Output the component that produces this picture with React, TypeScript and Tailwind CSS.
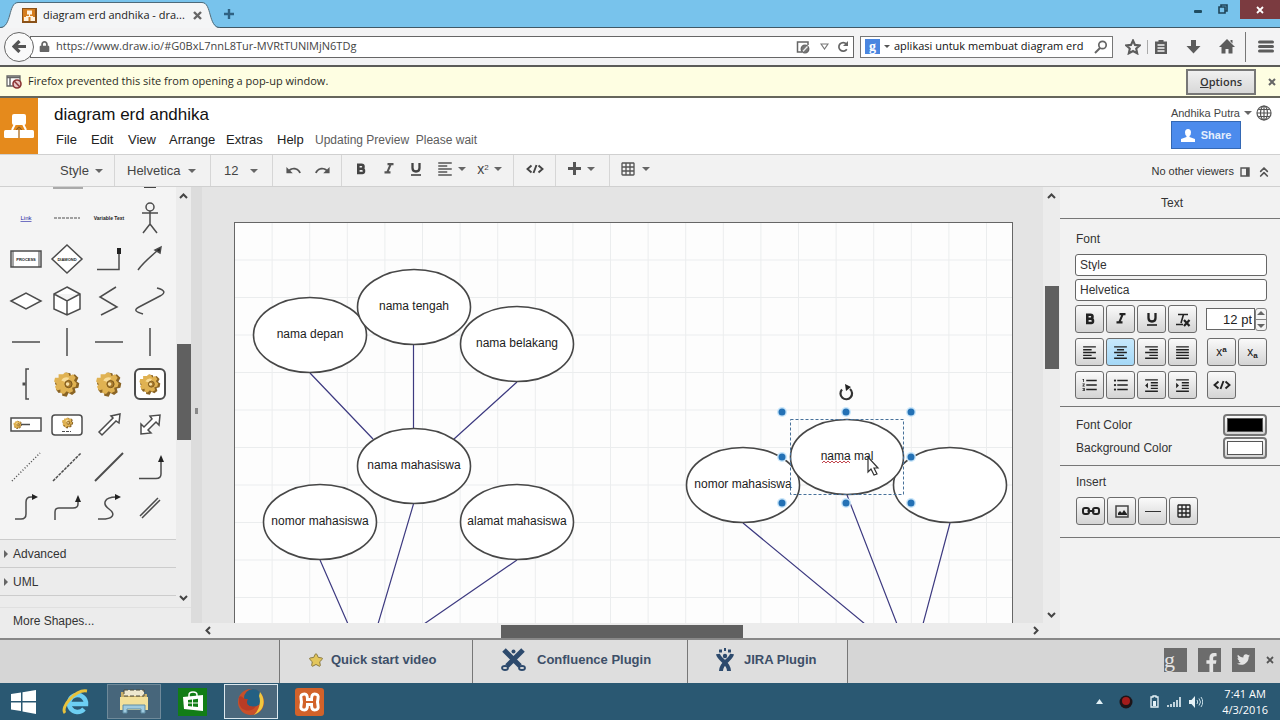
import React from 'react';
import {
  MdFormatItalic, MdFormatAlignLeft, MdFormatAlignCenter, MdFormatAlignRight,
  MdFormatAlignJustify, MdFormatListBulleted, MdFormatListNumbered, MdFormatIndentDecrease, MdFormatIndentIncrease,
  MdUndo, MdRedo, MdGridOn,
} from 'react-icons/md';
import { FaLock, FaStar, FaFacebookF, FaTwitter } from 'react-icons/fa';
import { ChevronsUp } from 'lucide-react';

const caret = 'h-0 w-0 shrink-0 border-x-4 border-t-4 border-x-transparent border-t-[#666]';

function Caret() {
  return <span className={caret} />;
}

function BoldIcon() {
  return (
    <svg width="18" height="18" viewBox="0 0 18 18" fill="none" stroke="currentColor" strokeWidth="2.600">
      <path d="M6.300 4.800H9.500Q11.500 4.800 11.500 6.800T9.500 8.800H6.300ZM6.300 8.800H10Q12 8.800 12 11T10 13H6.300Z" />
    </svg>
  );
}

function UnderlineIcon() {
  return (
    <svg width="16" height="18" viewBox="0 0 16 18" fill="none" stroke="currentColor">
      <path d="M4.500 3V8Q4.500 11.500 8 11.500T11.500 8V3" strokeWidth="2.300" /><path d="M3 15H13" strokeWidth="1.600" />
    </svg>
  );
}

function CodeIcon() {
  return (
    <svg width="18" height="10" viewBox="0 0 18 10" fill="none" stroke="currentColor" strokeWidth="1.900" className="shrink-0">
      <path d="M5.500 1.500L1.500 5L5.500 8.500M12.500 1.500L16.500 5L12.500 8.500M10.500 1L7.500 9" />
    </svg>
  );
}

function TitleBar() {
  return (
    <div className="flex h-7 shrink-0 items-stretch border-b border-[#3f5866] bg-[#78c3ec]">
      <div className="-mb-px flex pt-0.5">
        <svg width="18" height="26" viewBox="0 0 18 26" className="shrink-0">
          <path d="M0 26C12 26 7 1 18 1V26Z" fill="#f4f5f6" />
          <path d="M0 25.5C12 25.5 8 .5 18 .5" fill="none" stroke="#4d6a7a" />
        </svg>
        <div className="flex w-[184px] items-center border-t border-[#4d6a7a] bg-[#f4f5f6] pl-1">
          <svg width="15" height="15" viewBox="0 0 15 15" className="shrink-0">
            <rect width="15" height="15" fill="#8a5219" />
            <rect x="1" y="1" width="12" height="12" fill="#d57d1e" />
            <path d="M5 2.500h5v4H5zM2 9h4.500v4H2zM8.500 9H13v4H8.500zM7 6h1v2H7zM4 8h7v1H4z" fill="#fff3e0" />
          </svg>
          <span className="ml-1.5 whitespace-nowrap text-[11px] font-medium text-[#222]">diagram erd andhika - dra...</span>
          <button aria-label="Close tab" className="ml-auto">
            <svg width="9" height="9" viewBox="0 0 9 9"><path d="M1 1l7 7M8 1L1 8" stroke="#666" strokeWidth="2.400" /></svg>
          </button>
        </div>
        <svg width="18" height="26" viewBox="0 0 18 26" className="shrink-0">
          <path d="M18 26C6 26 11 1 0 1V26Z" fill="#f4f5f6" />
          <path d="M18 25.5C6 25.5 10 .5 0 .5" fill="none" stroke="#4d6a7a" />
        </svg>
      </div>
      <button aria-label="New tab" className="flex items-center pl-1">
        <svg width="10" height="10" viewBox="0 0 10 10"><path d="M5 0v10M0 5h10" stroke="#2f6182" strokeWidth="2.400" /></svg>
      </button>
      <div className="ml-auto flex items-start gap-4">
        <button aria-label="Minimize" className="pt-2.5"><svg width="8" height="3" className="block"><rect width="8" height="3" rx="1" fill="#1f4c61" /></svg></button>
        <button aria-label="Restore" className="pt-1">
          <svg width="10" height="10" viewBox="0 0 10 10" className="block"><path d="M1 3h6v6H1zM3 3V1h6v6H7" fill="none" stroke="#1f4458" strokeWidth="1.600" /></svg>
        </button>
        <button aria-label="Close window" className="-ml-1 flex h-[19px] w-10 items-center justify-center bg-[#7b3b40]">
          <svg width="8" height="8" viewBox="0 0 8 8"><path d="M1 1l6 6M7 1L1 7" stroke="#fff" strokeWidth="1.800" /></svg>
        </button>
      </div>
    </div>
  );
}

function NavBar() {
  return (
    <div className="flex h-[39px] shrink-0 items-center border-b-2 border-[#5b5b58] bg-[#f3f3f4] pl-1">
      <button aria-label="Back" className="z-10 flex h-[30px] w-[30px] shrink-0 items-center justify-center rounded-full border border-[#666] bg-[#fafafa]">
        <svg width="14" height="13" viewBox="0 0 14 13"><path d="M7.500 1L2 6.500L7.500 12M2 6.500H14" fill="none" stroke="#555" strokeWidth="3.200" /></svg>
      </button>
      <div className="-ml-1 flex h-[22px] min-w-0 flex-1 items-center border border-[#666] bg-white pl-1.5">
        <FaLock size={11} color="#666" className="ml-0.5 shrink-0" />
        <input aria-label="Address" className="ml-1.5 min-w-0 flex-1 bg-transparent text-[11px] text-[#444] outline-none" defaultValue="https://www.draw.io/#G0BxL7nnL8Tur-MVRtTUNlMjN6TDg" />
        <svg width="14" height="14" viewBox="0 0 14 14" className="shrink-0">
          <path d="M6 12H1.500V2H12v3" fill="none" stroke="#666" strokeWidth="1.500" />
          <circle cx="9" cy="9" r="3.800" fill="#777" stroke="#666" strokeWidth="1.300" /><path d="M7 11.300L11.500 6.500" stroke="#eee" strokeWidth="1.300" />
        </svg>
        <svg width="9" height="7" viewBox="0 0 9 7" className="ml-2.5 shrink-0"><path d="M1 1h7L4.500 6Z" fill="none" stroke="#777" strokeWidth="1.200" /></svg>
        <button aria-label="Reload" className="ml-2 mr-1">
          <svg width="12" height="12" viewBox="0 0 12 12"><path d="M9.800 8.200A4.300 4.300 0 1 1 9.400 3" fill="none" stroke="#666" strokeWidth="1.700" /><path d="M11 0v5H6Z" fill="#666" /></svg>
        </button>
      </div>
      <div className="ml-1.5 flex h-[22px] w-[253px] shrink-0 items-center border border-[#777] bg-white pl-1">
        <span className="flex h-[15px] w-[15px] shrink-0 items-center justify-center bg-[#4a86e0] font-['Liberation_Serif',serif] text-sm font-bold leading-none text-white">g</span>
        <span className="ml-1 h-0 w-0 shrink-0 border-x-[3px] border-t-[3px] border-x-transparent border-t-[#555]" />
        <input aria-label="Search" className="ml-1 min-w-0 flex-1 bg-transparent text-[11px] text-[#111] outline-none" defaultValue="aplikasi untuk membuat diagram erd" />
        <svg width="14" height="14" viewBox="0 0 14 14" className="mr-1 shrink-0"><circle cx="8.500" cy="5" r="3.700" fill="none" stroke="#666" strokeWidth="1.700" /><path d="M6 8L1 13" stroke="#666" strokeWidth="2" /></svg>
      </div>
      <div className="ml-3 flex shrink-0 items-center">
        <button aria-label="Bookmark">
          <svg width="16" height="16" viewBox="0 0 16 16"><path d="M8 1.500l2 4.400 4.700.5-3.500 3.200 1 4.700L8 12l-4.200 2.300 1-4.700L1.300 6.400 6 5.900Z" fill="none" stroke="#5c5c5c" strokeWidth="2.100" /></svg>
        </button>
        <span className="mx-1.5 h-3.5 w-px bg-[#aaa]" />
        <button aria-label="Bookmarks list">
          <svg width="14" height="16" viewBox="0 0 14 16"><path d="M1 2.500h3.500V1h5v1.500H13V15H1Z" fill="#5c5c5c" /><path d="M3.500 6h7M3.500 9h7M3.500 12h7" stroke="#f3f3f4" strokeWidth="1.300" /></svg>
        </button>
        <button aria-label="Downloads" className="ml-[18px]"><svg width="15" height="15" viewBox="0 0 15 15"><path d="M5 1h5v6h4.500L7.500 14.500L.5 7H5Z" fill="#5c5c5c" /></svg></button>
        <button aria-label="Home" className="ml-[18px]"><svg width="16" height="15" viewBox="0 0 16 15"><path d="M8 0L16 8H13.500V14.500H9.500V10H6.500V14.500H2.500V8H0ZM11.500 1h2v3.500l-2-2Z" fill="#5c5c5c" /></svg></button>
        <span className="ml-2.5 h-[30px] w-px bg-[#777]" />
        <button aria-label="Menu" className="ml-3 mr-1.5"><svg width="16" height="13" className="block"><path d="M1.500 2h13M1.500 6.500h13M1.500 11h13" stroke="#5c5c5c" strokeWidth="3" strokeLinecap="round" /></svg></button>
      </div>
    </div>
  );
}

function Notification() {
  return (
    <div className="flex h-[31px] shrink-0 items-center border-b-2 border-[#66665c] bg-[#fefee2] pl-1.5">
      <svg width="16" height="15" viewBox="0 0 16 15" className="shrink-0">
        <path d="M1 2h13v10H1Z" fill="#fff" stroke="#666" strokeWidth="1.300" /><path d="M1 3.500h13M4 3v9" stroke="#666" strokeWidth="1.500" />
        <circle cx="11" cy="10" r="4" fill="#e9c6c6" stroke="#8b3535" strokeWidth="1.600" /><path d="M8.300 7.300l5.400 5.400" stroke="#8b3535" strokeWidth="1.500" />
      </svg>
      <span className="ml-1.5 text-[11px] font-medium text-[#2c2c24]">Firefox prevented this site from opening a pop-up window.</span>
      <button className="ml-auto h-[26px] w-[70px] border-2 border-[#777] bg-linear-to-b from-[#f0f0f0] to-[#d8d8d8] text-[11px] font-semibold leading-none text-[#333]"><u>O</u>ptions</button>
      <button aria-label="Dismiss" className="ml-3 mr-1"><svg width="8" height="8" viewBox="0 0 8 8"><path d="M1 1l6 6M7 1L1 7" stroke="#666" strokeWidth="2" /></svg></button>
    </div>
  );
}

function Header() {
  return (
    <header className="flex h-14 shrink-0 bg-white font-['Liberation_Sans',sans-serif]">
      <div className="flex w-[38px] items-center justify-center bg-[#e58a1c]">
        <svg width="30" height="26" viewBox="0 0 30 26">
          <path d="M12 9L8 17M18 9l4 8" stroke="#fff" strokeWidth="2" />
          <rect x="8" y="1" width="14" height="11" rx="2" fill="#fff" /><rect y="17" width="30" height="8" rx="1.500" fill="#fff" /><path d="M12.500 17Q15 11 17.500 17" fill="#e58a1c" stroke="#7d5524" /><path d="M15 15v10" stroke="#a8691f" strokeWidth="1.300" />
        </svg>
      </div>
      <div className="flex flex-col pl-4">
        <h1 className="mt-1.5 text-[17px] leading-[22px] text-[#111]">diagram erd andhika</h1>
        <nav className="mt-1.5 flex text-[13px] leading-4 text-[#222]">
          <button className="ml-0.5 w-[35px] text-left">File</button>
          <button className="w-[37px] text-left">Edit</button>
          <button className="w-[41px] text-left">View</button>
          <button className="w-[57px] text-left">Arrange</button>
          <button className="w-[51px] text-left">Extras</button>
          <button className="w-[38px] text-left">Help</button>
          <span className="text-xs leading-4 text-[#5c5c5c]">Updating Preview&nbsp; Please wait</span>
        </nav>
      </div>
      <div className="ml-auto flex flex-col items-end pr-2">
        <div className="mt-[7px] flex items-center text-[11px] leading-4 text-[#444]">
          <button className="mr-1">Andhika Putra</button>
          <Caret />
          <button aria-label="Language" className="ml-1">
            <svg width="16" height="16" viewBox="0 0 16 16" fill="none" stroke="#555" strokeWidth="1.200"><circle cx="8" cy="8" r="7" /><ellipse cx="8" cy="8" rx="3.500" ry="7" /><path d="M1 8h14M8 1v14M2.500 4.500h11M2.500 11.500h11" /></svg>
          </button>
        </div>
        <button className="mr-[31px] flex h-7 w-[70px] items-center justify-center gap-1.5 border border-[#3468b4] bg-[#4c8bec] text-[11px] font-bold text-[#e4eefc]">
          <svg width="14" height="13" viewBox="0 0 14 13"><path d="M7 0Q10 0 10 3.500Q10 6 8.500 7V8L14 10V13H0V10L5.500 8V7Q4 6 4 3.500Q4 0 7 0Z" fill="#fff" /></svg>
          Share
        </button>
      </div>
    </header>
  );
}

const group = 'flex h-full items-center border-r border-[#d6d6d6]';

function Toolbar() {
  return (
    <div className="flex h-[33px] shrink-0 items-center border-y border-[#d0d0d0] bg-[#f2f2f2] font-['Liberation_Sans',sans-serif] text-[13px] text-[#444]">
      <button className={`${group} w-[115px] gap-1.5 pl-[60px]`}>Style<Caret /></button>
      <button className={`${group} w-24 gap-2 pl-3`}>Helvetica<Caret /></button>
      <button className={`${group} w-[62px] gap-3 pl-[13px]`}>12<Caret /></button>
      <div className={`${group} w-[69px] gap-3 pl-3`}>
        <button aria-label="Undo"><MdUndo size={17} color="#555" /></button>
        <button aria-label="Redo"><MdRedo size={17} color="#555" /></button>
      </div>
      <div className={`${group} w-[172px] pb-1 pl-2.5`}>
        <button aria-label="Bold" className="w-7"><BoldIcon /></button>
        <button aria-label="Italic" className="w-7"><MdFormatItalic size={18} color="#555" /></button>
        <button aria-label="Underline" className="w-7"><UnderlineIcon /></button>
        <button aria-label="Align" className="flex w-10 items-center gap-1"><MdFormatAlignLeft size={18} color="#555" /><Caret /></button>
        <button aria-label="Superscript" className="flex items-center gap-1"><span className="w-3.5 text-sm leading-none">x<sup className="text-[8px]">2</sup></span><Caret /></button>
      </div>
      <div className={`${group} w-[42px] justify-center pb-1`}><button aria-label="HTML"><CodeIcon /></button></div>
      <button aria-label="Insert" className={`${group} w-[54px] gap-1.5 pb-1 pl-3`}>
        <svg width="13" height="13" className="shrink-0"><path d="M6.500 0v13M0 6.500h13" stroke="#555" strokeWidth="3" /></svg><Caret />
      </button>
      <button aria-label="Table" className="flex items-center gap-1.5 pb-1 pl-2.5"><MdGridOn size={16} color="#555" /><Caret /></button>
      <div className="ml-auto flex items-center gap-1.5 pr-2 pt-0.5 text-[11px] text-[#333]">
        No other viewers
        <svg width="10" height="10" viewBox="0 0 10 10"><path d="M1 1h8v8H1Z" fill="none" stroke="#555" strokeWidth="1.400" /><path d="M7.500 1v8" stroke="#555" strokeWidth="3" /></svg>
        <button aria-label="Collapse"><ChevronsUp size={16} strokeWidth={2.500} color="#555" /></button>
      </div>
    </div>
  );
}

function Gear() {
  return (
    <g transform="translate(3.500 3) scale(.9)">
      <path d="M15 9l2-3 5 1 1 3 4-2 4 4-2 4 3 2-1 5-4 1 1 4-4 3-4-2-2 4-5-1 0-4-4 1-3-4 2-3-3-3 1-5 4 0 0-4Z" fill="#8a6425" stroke="none" />
      <path d="M14 8l2-2 4 1 1 3 4-2 3 4-2 3 3 3-1 4-4 1 1 4-4 2-3-2-3 3-4-1 0-4-4 1-2-4 2-3-3-3 1-4 4 0 0-4Z" fill="#e0b252" stroke="none" />
      <path d="M12 15Q15 10 21 12L17 17Z" fill="#f8dc98" stroke="none" />
      <circle cx="20" cy="19" r="4" fill="#a87a2c" stroke="#73501a" strokeWidth="1" />
      <circle cx="19" cy="19" r="2" fill="#f6e0a8" stroke="none" />
    </g>
  );
}

const shapes: { name: string; art: React.ReactNode }[] = [
  { name: 'Link', art: <text x="20" y="22" fontSize="6" textAnchor="middle" fill="#1a1aa0" stroke="none" textDecoration="underline">Link</text> },
  { name: 'Timestamp', art: <path d="M7 20H33" strokeDasharray="3 1" strokeWidth="1" /> },
  { name: 'Variable', art: <text x="20" y="22" fontSize="5" fontWeight="bold" textAnchor="middle" fill="#222" stroke="none">Variable Text</text> },
  { name: 'Actor', art: <g><circle cx="20" cy="9" r="4" /><path d="M20 13V26M12 15H28M20 26L13 35M20 26L27 35" /></g> },
  { name: 'Fixed process', art: <g><rect x="5" y="12" width="30" height="16" fill="#fff" /><path d="M7 12v16M33 12v16" strokeWidth="1" /><text x="20" y="22" fontSize="4" fontWeight="bold" textAnchor="middle" fill="#222" stroke="none">PROCESS</text></g> },
  { name: 'Decision', art: <g><path d="M20 6L35 20L20 34L5 20Z" fill="#fff" /><text x="20" y="22" fontSize="4" fontWeight="bold" textAnchor="middle" fill="#222" stroke="none">DIAMOND</text></g> },
  { name: 'Elbow', art: <g><path d="M8 30.500H30V14" /><path d="M28 9h4v6h-4Z" fill="#222" stroke="none" /></g> },
  { name: 'Arrow line', art: <g><path d="M8 31C12 25 20 18 27 12" /><path d="M31 8l-1 6-5-3Z" fill="#222" /></g> },
  { name: 'Rhombus', art: <path d="M5 20L20 12L35 20L20 28Z" fill="#fff" /> },
  { name: 'Cube', art: <path d="M20 6L33 13V28L20 34L7 28V13ZM7 13L20 20L33 13M20 20V34" fill="#fff" /> },
  { name: 'Zigzag', art: <path d="M27 6L11 16L28 26L12 34" /> },
  { name: 'Curve', art: <path d="M27 7C35 9 36 12 30 15L9 26C3 29 6 31 13 33" /> },
  { name: 'Line', art: <path d="M6 20H34" /> },
  { name: 'Vertical line', art: <path d="M20 6V34" /> },
  { name: 'Thin line', art: <path d="M6 20H34" /> },
  { name: 'Thin vertical line', art: <path d="M20 6V34" /> },
  { name: 'Bracket', art: <g><path d="M23 5H20V35H23" /><path d="M16.500 20h3" strokeWidth="3" /></g> },
  { name: 'Gear image', art: <Gear /> },
  { name: 'Gear icon', art: <Gear /> },
  { name: 'Gear in box', art: <g><rect x="5" y="5" width="30" height="30" rx="5" fill="#fff" strokeWidth="2" /><g transform="translate(3.500 3.500) scale(.83)"><Gear /></g></g> },
  { name: 'Label', art: <g><rect x="5" y="13" width="30" height="13" fill="#fff" /><g transform="translate(5 13) scale(.34)"><Gear /></g><path d="M15 19.500H24" /></g> },
  { name: 'Label card', art: <g><rect x="5" y="10" width="30" height="20" rx="3" fill="#fff" /><g transform="translate(12 9) scale(.44)"><Gear /></g><path d="M15 26.500H24" strokeDasharray="3 1" strokeWidth="1" /></g> },
  { name: 'Arrow', art: <path d="M10 27L24 13L22 11L31 9L30 18L27 16L13 30Z" fill="#fff" /> },
  { name: 'Double arrow', art: <path d="M11 29V19L14 22L22 14L20 11L30 10L29 20L26 17L18 25L21 28Z" fill="#fff" /> },
  { name: 'Dotted line', art: <path d="M6 34L34 6" strokeDasharray="1 2" /> },
  { name: 'Dashed line', art: <path d="M6 34L34 6" strokeDasharray="3 1" /> },
  { name: 'Solid line', art: <path d="M6 34L34 6" strokeWidth="2" /> },
  { name: 'Rounded elbow', art: <g><path d="M9 31.500H26Q31 31.500 31 27V12" /><path d="M31 8l3 7h-6Z" fill="#222" stroke="none" /></g> },
  { name: 'S elbow', art: <g><path d="M9 31H15Q20 31 20 26V14Q20 9 25 9H27" /><path d="M32 9l-6 3V6Z" fill="#222" stroke="none" /></g> },
  { name: 'Step elbow', art: <g><path d="M8 32V24Q8 20 12 20H26Q31 20 31 16V13" /><path d="M31 7l3 7h-6Z" fill="#222" stroke="none" /></g> },
  { name: 'S curve', art: <g><path d="M9 31C25 32 27 26 20 21C13 16 15 9 27 9" /><path d="M32 9l-6 3V6Z" fill="#222" stroke="none" /></g> },
  { name: 'Double line', art: <path d="M10 28L28 10M12 30L30 12" /> },
];

function VScroll({ thumbTop, thumbHeight, grow }: { thumbTop: string; thumbHeight: string; grow?: boolean }) {
  return (
    <div className={`flex w-[15px] shrink-0 flex-col items-center bg-[#ececec] py-1.5 ${grow ? 'flex-1' : ''}`}>
      <svg width="9" height="6" className="shrink-0"><path d="M1 5L4.500 1.500L8 5" fill="none" stroke="#444" strokeWidth="2" /></svg>
      <div className={`w-[14px] shrink-0 bg-[#606060] ${thumbTop} ${thumbHeight}`} />
      <svg width="9" height="6" className="mt-auto shrink-0"><path d="M1 1L4.500 4.500L8 1" fill="none" stroke="#444" strokeWidth="2" /></svg>
    </div>
  );
}

function Sidebar() {
  return (
    <aside className="flex w-[191px] shrink-0 flex-col bg-[#f4f4f4] font-['Liberation_Sans',sans-serif] text-xs text-[#333]">
      <div className="flex min-h-0 flex-1">
        <div className="flex min-w-0 flex-1 flex-col overflow-hidden">
          <div className="flex h-2.5 shrink-0 items-start pl-[53px]"><span className="h-0.5 w-[30px] bg-[#aaa]" /><span className="ml-[61px] h-px w-3 bg-[#444]" /></div>
          <div className="grid h-[332px] shrink-0 grid-cols-4 grid-rows-8 px-[5px]">
            {shapes.map((s) => (
              <button key={s.name} aria-label={s.name} className="flex items-center justify-center">
                <svg width="40" height="40" viewBox="0 0 40 40" fill="none" stroke="#4c4c4c" strokeWidth="1.500" className="shrink-0">{s.art}</svg>
              </button>
            ))}
          </div>
          <button className="mt-2.5 flex h-7 shrink-0 items-center gap-[5px] border-t border-[#ccc] bg-[#ececec] pl-1"><span className="h-0 w-0 border-y-4 border-l-4 border-y-transparent border-l-[#666]" />Advanced</button>
          <button className="flex h-7 shrink-0 items-center gap-[5px] border-t border-[#ccc] bg-[#ececec] pl-1"><span className="h-0 w-0 border-y-4 border-l-4 border-y-transparent border-l-[#666]" />UML</button>
          <div className="flex-1 border-t border-[#ccc] bg-[#ececec]" />
        </div>
        <VScroll thumbTop="mt-[145px]" thumbHeight="h-[96px]" />
      </div>
      <button className="h-[31px] border-t border-[#e0e0e0] bg-[#ececec] pb-1 pl-[13px] text-left">More Shapes...</button>
    </aside>
  );
}

const nodes: { cx: number; cy: number; label?: string }[] = [
  { cx: 310, cy: 335, label: 'nama depan' },
  { cx: 414, cy: 307, label: 'nama tengah' },
  { cx: 517, cy: 344, label: 'nama belakang' },
  { cx: 414, cy: 466, label: 'nama mahasiswa' },
  { cx: 320, cy: 522, label: 'nomor mahasiswa' },
  { cx: 517, cy: 522, label: 'alamat mahasiswa' },
  { cx: 743, cy: 485, label: 'nomor mahasiswa' },
  { cx: 950, cy: 485 },
  { cx: 847, cy: 457, label: 'nama mal' },
];

const handles = [[782, 412], [846, 412], [911, 412], [782, 457], [911, 457], [782, 503], [846, 503], [911, 503]];

function Diagram() {
  return (
    <svg width="777" height="401" viewBox="235 223 777 401" className="block font-['Liberation_Sans',sans-serif]">
      <defs>
        <pattern id="grid" x="235" y="223" width="37.600" height="37.500" patternUnits="userSpaceOnUse">
          <path d="M37.100 0V37.500M0 37H37.600" stroke="#ebedee" fill="none" />
        </pattern>
      </defs>
      <rect x="235" y="223" width="777" height="401" fill="url(#grid)" />
      <path d="M310 373L373 439M413.500 345V429M517 382L454 439M413.500 504L378 624M320 560L348 624M517 560L424 624M743 523L865 624M847 495L897 624M950 523L923 624" stroke="#3d3a80" strokeWidth="1.200" fill="none" />
      {nodes.map((n, i) => (
        <g key={i}>
          <ellipse cx={n.cx} cy={n.cy} rx="56.500" ry="37.500" fill="#fff" stroke="#474747" strokeWidth="1.600" />
          {n.label && <text x={n.cx} y={n.cy + 3} textAnchor="middle" fontSize="12" fill="#1c1c1c">{n.label}</text>}
        </g>
      ))}
      <path d="M822 463l2-2 2 2 2-2 2 2 2-2 2 2 2-2 2 2 2-2 2 2 2-2 2 2 2-2 2 2" stroke="#c2474f" fill="none" />
      <rect x="790.5" y="419.5" width="113" height="75" fill="none" stroke="#47719a" strokeDasharray="3 2" />
      {handles.map(([x, y]) => (
        <g key={`${x}-${y}`}><circle cx={x} cy={y} r="5" fill="#c9e6fa" /><circle cx={x} cy={y} r="3.500" fill="#2471b5" /></g>
      ))}
      <path d="M842 389.500A5.800 5.800 0 1 0 850 389" fill="none" stroke="#333" strokeWidth="2.200" /><path d="M845 384l6 3-5 4Z" fill="#222" />
      <path d="M868 457V472L871 469L874 475L877 474L874 468H878Z" fill="#fff" stroke="#333" strokeWidth="1.200" />
    </svg>
  );
}

function Canvas() {
  return (
    <div className="flex min-w-0 flex-1 flex-col bg-[#e4e4e4]">
      <div className="flex min-h-0 flex-1">
        <div className="flex w-[11px] shrink-0 items-center justify-center bg-[#dcdcdc] pt-3"><span className="h-1.5 w-[3px] bg-[#888]" /></div>
        <div className="min-w-0 flex-1 overflow-hidden pl-8 pt-[35px]">
          <div className="h-full w-[779px] overflow-hidden border border-b-0 border-[#666] bg-[#fdfdfd]"><Diagram /></div>
        </div>
      </div>
      <div className="flex h-[15px] shrink-0 items-center bg-[#ececec] pl-3.5">
        <svg width="6" height="9" className="shrink-0"><path d="M5 1L1.500 4.500L5 8" fill="none" stroke="#444" strokeWidth="2" /></svg>
        <div className="ml-[290px] h-[13px] w-[242px] self-end bg-[#606060]" />
        <svg width="6" height="9" className="ml-auto mr-1 shrink-0"><path d="M1 1L4.500 4.500L1 8" fill="none" stroke="#444" strokeWidth="2" /></svg>
      </div>
    </div>
  );
}

const btn = 'flex h-7 w-[29px] items-center justify-center rounded-[3px] border border-[#6c6c6c] text-[#222]';
const face = 'bg-linear-to-b from-[#fafafa] to-[#d4d4d4]';

function Tool({ label, on, children }: { label: string; on?: boolean; children: React.ReactNode }) {
  return <button aria-label={label} className={`${btn} ${on ? 'bg-linear-to-b from-[#c8e9fc] to-[#a4d8f7]' : face}`}>{children}</button>;
}

function FormatPanel() {
  const field = 'h-[22px] w-full appearance-none rounded-[3px] border border-[#666] bg-white pl-1 text-xs leading-none text-[#333]';
  const swatch = `flex h-[22px] w-11 rounded-[4px] border-2 border-[#777] p-0.5 ${face}`;
  return (
    <aside className="w-[220px] shrink-0 bg-[#f2f2f2] font-['Liberation_Sans',sans-serif] text-xs text-[#333]">
      <h2 className="flex h-8 items-center justify-center border-b border-[#777] pl-1 text-xs">Text</h2>
      <section className="h-[188px] border-b border-[#777] pl-[15px] pr-[13px] pt-3">
        <h3 className="pl-px leading-4">Font</h3>
        <div className="mt-[7px] flex flex-col gap-[3px]">
          <select aria-label="Text style" className={field}><option>Style</option></select>
          <select aria-label="Font family" className={field}><option>Helvetica</option></select>
        </div>
        <div className="mt-1 flex flex-col gap-[5px]">
          <div className="flex gap-0.5">
            <Tool label="Bold"><BoldIcon /></Tool>
            <Tool label="Italic"><MdFormatItalic size={18} /></Tool>
            <Tool label="Underline"><UnderlineIcon /></Tool>
            <Tool label="Clear formatting"><svg width="16" height="15" viewBox="0 0 16 15" fill="none" stroke="#222"><path d="M3 2.500H13M8.500 2.500L6 11M1 12.500H8" strokeWidth="1.600" /><path d="M9 8l5.500 6M14.500 8L9 14" strokeWidth="2.200" /></svg></Tool>
            <div className="ml-auto flex items-center">
              <input aria-label="Font size" defaultValue="12 pt" className="h-[22px] w-[49px] border border-[#666] bg-white pr-0.5 text-right text-[13px] text-[#222]" />
              <div className="flex h-[23px] w-3 flex-col items-center justify-around rounded-[3px] border border-[#808080] bg-[#f4f4f4]">
                <span className="h-0 w-0 border-x-4 border-b-4 border-x-transparent border-b-[#666]" />
                <span className="h-px w-full bg-[#808080]" />
                <span className="h-0 w-0 border-x-4 border-t-4 border-x-transparent border-t-[#666]" />
              </div>
            </div>
          </div>
          <div className="flex gap-0.5">
            <Tool label="Align left"><MdFormatAlignLeft size={17} /></Tool>
            <Tool label="Align center" on><MdFormatAlignCenter size={17} /></Tool>
            <Tool label="Align right"><MdFormatAlignRight size={17} /></Tool>
            <Tool label="Justify"><MdFormatAlignJustify size={17} /></Tool>
            <div className="ml-auto flex gap-0.5">
              <Tool label="Superscript"><span className="text-xs leading-none">x<sup className="text-[8px] font-bold">a</sup></span></Tool>
              <Tool label="Subscript"><span className="text-xs leading-none">x<sub className="text-[8px] font-bold">a</sub></span></Tool>
            </div>
          </div>
          <div className="flex gap-0.5">
            <Tool label="Numbered list"><MdFormatListNumbered size={18} /></Tool>
            <Tool label="Bulleted list"><MdFormatListBulleted size={18} /></Tool>
            <Tool label="Decrease indent"><MdFormatIndentDecrease size={17} /></Tool>
            <Tool label="Increase indent"><MdFormatIndentIncrease size={17} /></Tool>
            <div className="ml-auto mr-[31px]"><Tool label="HTML"><CodeIcon /></Tool></div>
          </div>
        </div>
      </section>
      <section className="h-[59px] border-b border-[#777] pl-4 pr-[13px] pt-[7px]">
        <div className="flex items-center justify-between">Font Color<button aria-label="Font color" className={swatch}><span className="flex-1 self-stretch border border-[#555] bg-black" /></button></div>
        <div className="mt-px flex items-center justify-between">Background Color<button aria-label="Background color" className={swatch}><span className="flex-1 self-stretch border border-[#555] bg-white" /></button></div>
      </section>
      <section className="h-[72px] border-b border-[#777] pl-4 pt-2">
        <h3 className="leading-4">Insert</h3>
        <div className="mt-[7px] flex gap-0.5">
          <Tool label="Link"><svg width="18" height="8" viewBox="0 0 18 8" fill="none" stroke="#222" strokeWidth="2"><rect x="1" y="1" width="6" height="6" rx="2" /><rect x="11" y="1" width="6" height="6" rx="2" /><path d="M5.500 4H12.500" /></svg></Tool>
          <Tool label="Image"><svg width="14" height="13" viewBox="0 0 14 13"><path d="M1 1h12v11H1Z" fill="none" stroke="#444" strokeWidth="1.500" /><path d="M3 10V8l2-2 2 2 2-3 3 4v1Z" fill="#222" /></svg></Tool>
          <Tool label="Horizontal rule"><span className="h-px w-4 bg-[#333]" /></Tool>
          <Tool label="Table"><MdGridOn size={16} /></Tool>
        </div>
      </section>
    </aside>
  );
}

function Footer() {
  const cell = 'flex h-full items-center border-l border-[#777] bg-[#dedede]';
  return (
    <footer className="flex h-[45px] shrink-0 items-center border-t-2 border-[#888] bg-[#d6d6d6] font-['Liberation_Sans',sans-serif] text-[13px] font-bold text-[#3d4f68]">
      <div className="w-[279px] shrink-0" />
      <a href="#video" className={`${cell} w-[193px] gap-2 pb-1 pl-[29px]`}><FaStar size={14} color="#e3c65c" stroke="#86763d" strokeWidth={40} />Quick start video</a>
      <a href="#confluence" className={`${cell} w-[215px] gap-[11px] pb-1 pl-7`}>
        <svg width="25" height="23" viewBox="0 0 25 23" fill="none" stroke="#2d4a6d"><path d="M3 2L19 18M22 2L6 18" strokeWidth="5" /><ellipse cx="4" cy="20" rx="3" ry="2" strokeWidth="1.800" /><ellipse cx="21" cy="20" rx="3" ry="2" strokeWidth="1.800" /><circle cx="12.500" cy="3.500" r="2" fill="#2d4a6d" stroke="none" /></svg>
        Confluence Plugin
      </a>
      <a href="#jira" className={`${cell} w-[161px] gap-2.5 border-r pb-1 pl-7`}>
        <svg width="18" height="24" viewBox="0 0 18 24" fill="none" stroke="#2d4a6d"><path d="M2 6C3 12 13 14 13 23M16 6C15 12 5 14 5 23" strokeWidth="4" /><circle cx="9" cy="8" r="2.200" fill="#2d4a6d" stroke="none" /><path d="M3 3h3M8 1.500h2M12 3h3" strokeWidth="2.800" /></svg>
        JIRA Plugin
      </a>
      <div className="ml-auto flex items-center gap-[11px] pb-1 pr-1.5">
        <a href="#google" aria-label="Google" className="flex h-6 w-[23px] items-center bg-[#6c6c6c] font-['Liberation_Serif',serif] text-[22px] font-normal leading-none text-[#e4e4e4]">g</a>
        <a href="#facebook" aria-label="Facebook" className="flex h-6 w-[23px] items-end justify-center bg-[#6c6c6c] pl-1"><FaFacebookF size={19} color="#e4e4e4" /></a>
        <a href="#twitter" aria-label="Twitter" className="flex h-6 w-[23px] items-center justify-center bg-[#6c6c6c]"><FaTwitter size={13} color="#e4e4e4" /></a>
        <button aria-label="Close banner"><svg width="8" height="8" viewBox="0 0 8 8"><path d="M1 1l6 6M7 1L1 7" stroke="#555" strokeWidth="1.800" /></svg></button>
      </div>
    </footer>
  );
}

function Taskbar() {
  return (
    <div className="flex h-[37px] shrink-0 items-center bg-[#2a5872]">
      <button aria-label="Start" className="ml-[11px]"><svg width="25" height="24" viewBox="0 0 25 24"><path d="M0 4L10 2.500V11H0ZM11.500 2.200L25 0V11H11.500ZM0 12.500H10V21L0 19.500ZM11.500 12.500H25V24L11.500 21.500Z" fill="#fff" /></svg></button>
      <button aria-label="Internet Explorer" className="ml-[26px]">
        <svg width="28" height="28" viewBox="0 0 28 28" fill="none"><path d="M7 16H24A8.500 8.500 0 1 0 22 21" stroke="#6dcff3" strokeWidth="4.500" /><path d="M3 25C-2 19 14 1 25 3" stroke="#e8c23c" strokeWidth="3" /></svg>
      </button>
      <button aria-label="File Explorer" className="ml-[17px] flex h-[35px] w-[54px] items-center justify-center border border-[#6f8a9a] bg-[#47667b]">
        <svg width="30" height="27" viewBox="0 0 30 27"><path d="M2 4h9l2 2h15v16H2Z" fill="#c9b06a" /><path d="M5 2h20v6H5Z" fill="#eee8cf" stroke="#4d4a3a" strokeDasharray="4 2" /><path d="M1 9h28v13H1Z" fill="#f2e09a" /><path d="M4 17h22v8h-4v-4H8v4H4Z" fill="#9fcbe0" stroke="#5e8da5" /></svg>
      </button>
      <button aria-label="Store" className="ml-[17px] flex h-7 w-[29px] items-center justify-center bg-[#127d17]">
        <svg width="20" height="21" viewBox="0 0 20 21"><path d="M0 6L20 4V20L1 18Z" fill="#fff" /><path d="M6 6V4Q6 1 10 1T14 4V5" fill="none" stroke="#fff" strokeWidth="1.500" /><path d="M5 9l4-.5v3H5Zm5-.6 5-.6v3.700h-5ZM5 12.500h4v3l-4-.5Zm5 0h5V16l-5-.5Z" fill="#127d17" /></svg>
      </button>
      <button aria-label="Firefox" className="ml-[17px] flex h-[35px] w-[54px] items-center justify-center border border-[#dce8ee] bg-[#4b687c]">
        <svg width="28" height="28" viewBox="0 0 28 28"><circle cx="14" cy="14" r="13" fill="#c8502a" /><circle cx="16" cy="10" r="9" fill="#246083" /><path d="M23 4C29 11 28 23 17 27C23 21 24 13 22 8Z" fill="#f1c83f" /><path d="M2 9C5 6 6 12 11 11C8 16 12 20 19 18C15 25 4 24 2 15Z" fill="#b83c25" /></svg>
      </button>
      <button aria-label="XAMPP" className="ml-[17px]">
        <svg width="29" height="28" viewBox="0 0 29 28"><rect width="29" height="28" rx="3" fill="#d2622a" /><path d="M9.500 6Q5 6 6 10.500Q7 14 6 17.500Q5 22 9.500 22Q12.500 22 12.500 16.500H16.500Q16.500 22 19.500 22Q24 22 23 17.500Q22 14 23 10.500Q24 6 19.500 6Q16.500 6 16.500 11.500H12.500Q12.500 6 9.500 6Z" fill="none" stroke="#fff" strokeWidth="3" /></svg>
      </button>
      <div className="ml-auto flex items-center pr-3 text-white">
        <svg width="7" height="5"><path d="M0 5L3.500 0L7 5Z" fill="#e0f0f6" /></svg>
        <svg width="14" height="14" viewBox="0 0 14 14" className="ml-4"><circle cx="7" cy="7" r="6.500" fill="#1d1418" /><circle cx="7" cy="6" r="4" fill="#a31c1c" /></svg>
        <svg width="9" height="13" viewBox="0 0 9 13" className="ml-[17px]"><path d="M1 2h2V1h3v1h2v10H1Z" fill="none" stroke="#e6f2f7" strokeWidth="1.300" /><path d="M3 6h3v5H3Z" fill="#e6f2f7" /></svg>
        <svg width="14" height="11" viewBox="0 0 14 11" className="ml-2"><path d="M1 9v2M4 8v3M7 6v5M10 4v7M13 1v10" stroke="#e6f2f7" strokeWidth="1.600" /></svg>
        <svg width="14" height="12" viewBox="0 0 14 12" className="ml-2"><path d="M0 4h2.500L6 0V12L2.500 8H0Z" fill="#e6f2f7" /><path d="M8 4q1.500 2 0 4M10 2.500q3 3.500 0 7M12 1q3.500 5 0 10" fill="none" stroke="#c9dfe8" /></svg>
        <div className="ml-[19px] flex flex-col items-center text-[11px] leading-4"><span>7:41 AM</span><span>4/3/2016</span></div>
      </div>
    </div>
  );
}

export default function App() {
  return (
    <div className="flex h-screen flex-col overflow-hidden font-['Open_Sans',sans-serif]">
      <TitleBar />
      <NavBar />
      <Notification />
      <Header />
      <Toolbar />
      <main className="flex min-h-0 flex-1">
        <Sidebar />
        <Canvas />
        <div className="flex w-[17px] shrink-0 flex-col items-center bg-[#ececec]"><VScroll thumbTop="mt-[87px]" thumbHeight="h-[83px]" grow /><div className="h-3.5" /></div>
        <FormatPanel />
      </main>
      <Footer />
      <Taskbar />
    </div>
  );
}
